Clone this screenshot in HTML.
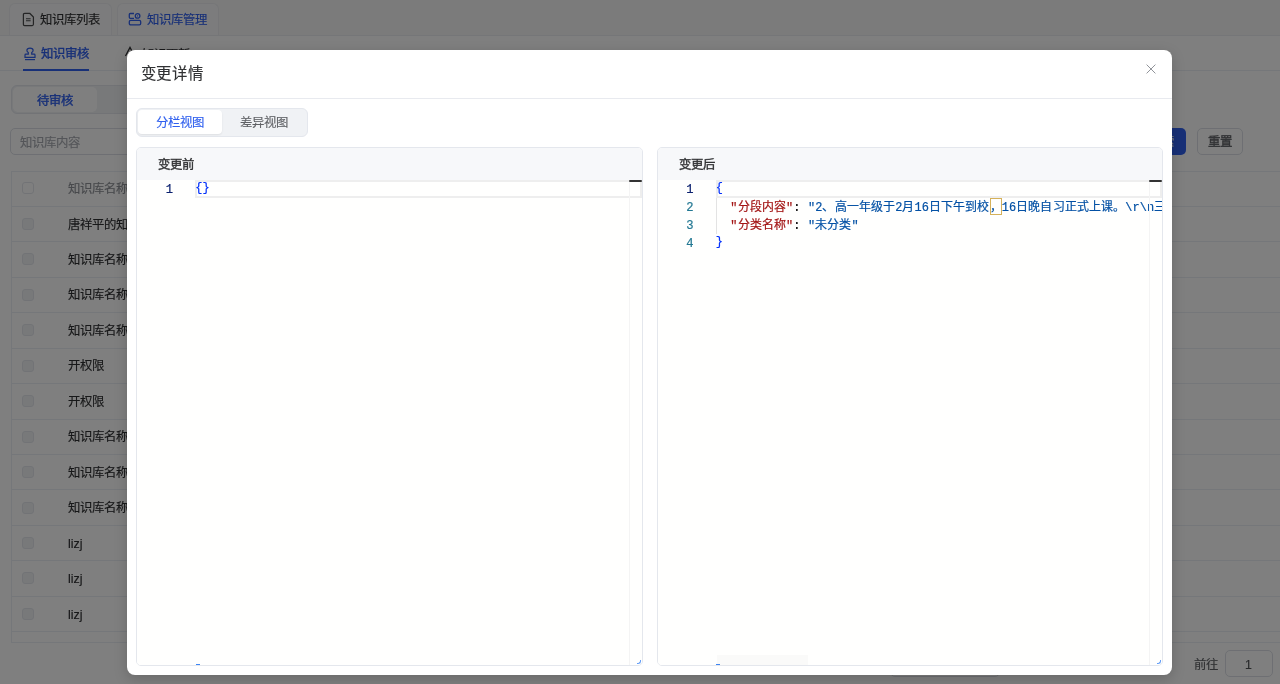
<!DOCTYPE html>
<html lang="zh-CN"><head><meta charset="utf-8">
<style>
*{box-sizing:border-box;margin:0;padding:0}
html,body{width:1280px;height:684px;overflow:hidden;background:#fff}
body{position:relative;font-family:"Liberation Sans",sans-serif;color:#303133}
.t,.cell,.ph span{-webkit-text-stroke:0.15px currentColor}
.m{-webkit-text-stroke:0.35px currentColor !important}
.abs{position:absolute}
.t{position:absolute;white-space:nowrap;line-height:1}
#page{position:absolute;left:0;top:0;width:1280px;height:684px;background:#fff;will-change:transform;overflow:hidden}
#topbar{left:0;top:0;width:1280px;height:36px;background:#f6f6f7;border-bottom:1px solid #eaecf0}
.ttab{position:absolute;top:3px;height:32px;background:#f9f9fa;border:1px solid #ecedf0;border-bottom:none;border-radius:6px 6px 0 0}
#sub{left:0;top:36px;width:1280px;height:35px;border-bottom:1px solid #ebeef5}
.row{position:absolute;left:11px;width:1269px;border-bottom:1px solid #ebeef5}
.cb{position:absolute;left:22.3px;width:12.2px;height:12px;border:1px solid #e4e7ed;border-radius:3px;background:#f0f2f5}
.cell{position:absolute;left:68px;font-size:12.4px;color:#303133;white-space:nowrap;line-height:1}
#mask{left:0;top:0;width:1280px;height:684px;background:rgba(0,0,0,.5)}
#modal{will-change:transform;left:127px;top:49.8px;width:1045px;height:625px;background:#fff;border-radius:8px;box-shadow:0 4px 14px rgba(0,0,0,.18)}
.panel{position:absolute;top:97px;height:519px;border:1px solid #e4e7ed;border-radius:5px;overflow:hidden;background:#fffffe}
.ph{position:absolute;left:0;top:0;width:100%;height:32px;background:#f7f8fa}
.ph span{-webkit-text-stroke:0.35px currentColor !important;position:absolute;left:21px;top:11px;font-size:12.4px;color:#303133;line-height:1}
.ed{position:absolute;left:0;top:32px;width:100%;bottom:0;background:#fffffe}
.ln{-webkit-text-stroke:0.2px currentColor;position:absolute;margin-top:0.6px;font-family:"Liberation Mono",monospace;font-size:12.13px;color:#237893;text-align:right;width:36px;left:0;line-height:18px}
.code{-webkit-text-stroke:0.2px currentColor;color:#000;position:absolute;left:58.3px;margin-top:0.5px;font-family:"Liberation Mono",monospace;font-size:11.95px;letter-spacing:0.11px;line-height:18px;white-space:pre}
.curline{position:absolute;left:58.3px;right:0;top:0;height:18px;border:2px solid #eeeeee}
.ruler{position:absolute;top:0;bottom:0;width:13px;border-left:1px solid #f4f4f4}
.rcur{position:absolute;left:-1px;right:0;top:0;height:2px;background:#333;border-radius:1px}
</style></head><body>
<div id="page">
<div id="topbar" class="abs">
  <div class="ttab" style="left:9px;width:103px"></div>
  <div class="ttab" style="left:117px;width:102px"></div>
</div>
<svg class="abs" style="left:21.5px;top:11.5px" width="13" height="15" viewBox="0 0 14 16"><path d="M2.5 1.5H8.5L12.3 5.3V13.2Q12.3 14.5 11 14.5H2.8Q1.5 14.5 1.5 13.2V2.8Q1.5 1.5 2.8 1.5Z" fill="none" stroke="#4a4b4d" stroke-width="1.3"/><path d="M4.3 7.2H9.3M4.3 9.3H9.3" stroke="#4a4b4d" stroke-width="1.2"/></svg>
<div class="t" style="left:40px;top:13.5px;font-size:12.4px;color:#303133">知识库列表</div>
<svg class="abs" style="left:128px;top:12px" width="14" height="14" viewBox="0 0 14 14"><path d="M6 1.5H2.3Q1.3 1.5 1.3 2.5V5.3Q1.3 6.3 2.3 6.3H6" fill="none" stroke="#3060ee" stroke-width="1.3"/><circle cx="9.6" cy="3.9" r="2.3" fill="none" stroke="#3060ee" stroke-width="1.3"/><circle cx="9.6" cy="3.9" r="0.6" fill="#3060ee"/><rect x="1.3" y="8.3" width="11.4" height="4.6" rx="1.4" fill="none" stroke="#3060ee" stroke-width="1.3"/></svg>
<div class="t" style="left:147px;top:13.5px;font-size:12.4px;color:#3060ee">知识库管理</div>
<div id="sub" class="abs"></div>
<svg class="abs" style="left:24px;top:46.8px" width="12" height="14" viewBox="0 0 12 14"><path d="M4.3 7.2V5.6Q2.9 4.8 2.9 3.3Q2.9 1.2 6 1.2Q9.1 1.2 9.1 3.3Q9.1 4.8 7.7 5.6V7.2H10.2Q11 7.2 11 8V10.3H1V8Q1 7.2 1.8 7.2Z" fill="none" stroke="#3060ee" stroke-width="1.2"/><path d="M1 12.6H11" stroke="#3060ee" stroke-width="1.2"/></svg>
<div class="t m" style="left:40.6px;top:48px;font-size:12.4px;color:#3060ee">知识审核</div>
<div class="abs" style="left:23px;top:69px;width:66px;height:2px;background:#3060ee"></div>
<svg class="abs" style="left:124px;top:46.3px" width="12" height="14" viewBox="0 0 12 14"><path d="M1.5 10L6 1.5L10.5 10" fill="none" stroke="#303133" stroke-width="1.3"/></svg>
<div class="t" style="left:142px;top:48.5px;font-size:12.4px;color:#303133">知识更新</div>
<!-- radio -->
<div class="abs" style="left:11px;top:85px;width:300px;height:29px;background:#f0f2f5;border:1px solid #e4e7ed;border-radius:6px"></div>
<div class="abs" style="left:13px;top:87px;width:84px;height:25px;background:#fff;border-radius:5px"></div>
<div class="t m" style="left:37px;top:94.5px;font-size:12.4px;color:#3060ee">待审核</div>
<!-- input -->
<div class="abs" style="left:10px;top:128px;width:300px;height:27px;border:1px solid #dcdfe6;border-radius:5px"></div>
<div class="t" style="left:20px;top:137px;font-size:12.4px;color:#a8abb2">知识库内容</div>
<div class="abs" style="left:1136px;top:128px;width:50px;height:27px;background:#3060ee;border-radius:5px"></div>
<div class="t" style="left:1150px;top:136px;font-size:12.4px;color:#fff">搜索</div>
<div class="abs" style="left:1197px;top:128px;width:46px;height:27px;border:1px solid #dcdfe6;border-radius:5px"></div>
<div class="t m" style="left:1208px;top:136px;font-size:12.4px;color:#606266">重置</div>
<!-- table -->
<div class="abs" style="left:11px;top:171px;width:1269px;height:472px;border:1px solid #ebeef5;border-right:none"></div>
<div id="rows">
<div class="row" style="top:171.3px;height:35.46px"></div><div class="cb" style="top:182.3px;background:#fff"></div><div class="cell" style="top:183.0px;color:#909399">知识库名称</div>
<div class="row" style="top:206.8px;height:35.46px"></div><div class="cb" style="top:217.8px"></div><div class="cell" style="top:218.5px;color:#303133">唐祥平的知识库</div>
<div class="row" style="top:242.2px;height:35.46px"></div><div class="cb" style="top:253.3px"></div><div class="cell" style="top:254.0px;color:#303133">知识库名称1</div>
<div class="row" style="top:277.7px;height:35.46px"></div><div class="cb" style="top:288.7px"></div><div class="cell" style="top:289.4px;color:#303133">知识库名称2</div>
<div class="row" style="top:313.1px;height:35.46px"></div><div class="cb" style="top:324.2px"></div><div class="cell" style="top:324.9px;color:#303133">知识库名称3</div>
<div class="row" style="top:348.6px;height:35.46px"></div><div class="cb" style="top:359.6px"></div><div class="cell" style="top:360.3px;color:#303133">开权限</div>
<div class="row" style="top:384.1px;height:35.46px"></div><div class="cb" style="top:395.1px"></div><div class="cell" style="top:395.8px;color:#303133">开权限</div>
<div class="row" style="top:419.5px;height:35.46px"></div><div class="cb" style="top:430.6px"></div><div class="cell" style="top:431.2px;color:#303133">知识库名称4</div>
<div class="row" style="top:455.0px;height:35.46px"></div><div class="cb" style="top:466.0px"></div><div class="cell" style="top:466.7px;color:#303133">知识库名称5</div>
<div class="row" style="top:490.4px;height:35.46px"></div><div class="cb" style="top:501.5px"></div><div class="cell" style="top:502.2px;color:#303133">知识库名称6</div>
<div class="row" style="top:525.9px;height:35.46px"></div><div class="cb" style="top:536.9px"></div><div class="cell" style="top:537.6px;color:#303133">lizj</div>
<div class="row" style="top:561.4px;height:35.46px"></div><div class="cb" style="top:572.4px"></div><div class="cell" style="top:573.1px;color:#303133">lizj</div>
<div class="row" style="top:596.8px;height:35.46px"></div><div class="cb" style="top:607.8px"></div><div class="cell" style="top:608.5px;color:#303133">lizj</div>
</div>
<!-- pagination -->
<div class="abs" style="left:890px;top:650px;width:110px;height:27px;border:1px solid #dcdfe6;border-radius:5px"></div>
<div class="t" style="left:1194px;top:659.2px;font-size:12.4px;color:#606266">前往</div>
<div class="abs" style="left:1225px;top:650px;width:48px;height:27px;border:1px solid #dcdfe6;border-radius:5px"></div>
<div class="t" style="left:1245px;top:659.2px;font-size:12.4px;color:#505255">1</div>
</div>

<div id="mask" class="abs"></div>

<div id="modal" class="abs">
  <div class="t" style="left:13.8px;top:16px;font-size:15.4px;letter-spacing:0.6px;color:#303133">变更详情</div>
  <div class="abs" style="left:0;top:48px;width:100%;height:1px;background:#e8eaef"></div>
  <svg class="abs" style="left:1018.2px;top:12.8px" width="12" height="12" viewBox="0 0 12 12"><path d="M1.6 1.6L10.4 10.4M10.4 1.6L1.6 10.4" stroke="#909399" stroke-width="1"/></svg>
  <div class="abs" style="left:9px;top:58px;width:172px;height:29px;background:#f0f2f5;border:1px solid #e4e7ed;border-radius:6px"></div>
  <div class="abs" style="left:11px;top:60px;width:84px;height:24px;background:#fff;border-radius:4px;box-shadow:0 1px 2px rgba(0,0,0,.08)"></div>
  <div class="t" style="left:29px;top:67px;font-size:12.4px;color:#3060ee">分栏视图</div>
  <div class="t" style="left:113px;top:67px;font-size:12.4px;color:#606266">差异视图</div>
  <div class="panel" style="left:9px;width:507px">
    <div class="ph"><span>变更前</span></div>
    <div class="ed">
      <div class="curline"></div>
      <div class="ln" style="top:0;color:#0b216f">1</div>
      <div class="code" style="top:0;color:#0431fa"><span style="position:relative;top:-1.5px">{}</span></div>
      <div class="abs" style="left:58.5px;bottom:0;width:4px;height:1.5px;background:#3d86f5"></div>
      <div class="abs" style="right:1px;bottom:1px;width:4px;height:4px;border-right:1.3px solid #3d86f5;border-bottom:1.3px solid #3d86f5;border-bottom-right-radius:3px;opacity:.8"></div>
      <div class="ruler" style="right:0"><div class="rcur"></div></div>
    </div>
  </div>
  <div class="panel" style="left:529.5px;width:506.8px">
    <div class="ph"><span>变更后</span></div>
    <div class="ed">
      <div class="curline"></div>
      <div class="ln" style="top:0;color:#0b216f">1</div>
      <div class="abs" style="left:58.5px;top:18px;width:1px;height:36px;background:#e3e3e3"></div>
      <div class="abs" style="left:332.5px;top:17.9px;width:12px;height:17.5px;border:1px solid #cea33d;opacity:.85"></div>
      <div class="ln" style="top:18px">2</div>
      <div class="ln" style="top:36px">3</div>
      <div class="ln" style="top:54px">4</div>
      <div class="code" style="top:0"><span style="color:#0431fa;position:relative;top:-1.5px">{</span>
  <span style="color:#a31515">"分段内容"</span>: <span style="color:#0451a5">"2、高一年级于2月16日下午到校，16日晚自习正式上课。\r\n三年级</span>
  <span style="color:#a31515">"分类名称"</span>: <span style="color:#0451a5">"未分类"</span>
<span style="color:#0431fa;position:relative;top:-1.5px">}</span></div>
      <div class="abs" style="left:58.5px;bottom:0;width:4px;height:1.5px;background:#3d86f5"></div>
      <div class="abs" style="right:1px;bottom:1px;width:4px;height:4px;border-right:1.3px solid #3d86f5;border-bottom:1.3px solid #3d86f5;border-bottom-right-radius:3px;opacity:.8"></div>
      <div class="abs" style="left:59px;bottom:0;width:91px;height:10px;background:rgba(100,100,100,.035)"></div>
      <div class="ruler" style="right:0"><div class="rcur"></div></div>
    </div>
  </div>
</div>
</body></html>
